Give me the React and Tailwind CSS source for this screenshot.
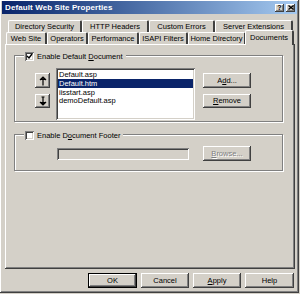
import React from 'react';

const raised = 'shadow-[inset_-1px_-1px_0_#404040,inset_1px_1px_0_#ffffff,inset_-2px_-2px_0_#808080]';
const sunken = 'shadow-[inset_1px_1px_0_#808080,inset_-1px_-1px_0_#ffffff,inset_2px_2px_0_#404040,inset_-2px_-2px_0_#d4d0c8]';

function Button({ children, className = '', disabled = false }) {
  return (
    <div
      className={`flex items-center justify-center bg-[#d4d0c8] ${raised} ${
        disabled ? 'text-[#808080] [text-shadow:1px_1px_0_#fff]' : 'text-black'
      } ${className}`}
    >
      {children}
    </div>
  );
}

function Check({ checked }) {
  return (
    <div className={`w-[9px] h-[9px] bg-white ${sunken} flex items-center justify-center`}>
      {checked && (
        <svg width="7" height="7" viewBox="0 0 7 7">
          <path d="M1 3 L3 5 L6 1" stroke="#000" strokeWidth="1.4" fill="none" />
        </svg>
      )}
    </div>
  );
}

function Tab({ label, w }) {
  return (
    <div
      className={`shrink-0 h-[12px] flex items-center justify-center border-t border-l border-white border-r-2 border-r-[#404040] rounded-t-[2px] ${w}`}
    >
      {label}
    </div>
  );
}

export default function App() {
  return (
    <div className="w-[300px] h-[294px] bg-[#d4d0c8] text-[7.5px] text-black font-['Liberation_Sans',Arial,sans-serif] leading-none overflow-hidden">
      <div className={`relative w-[299px] h-[293px] ${raised} p-[2px] flex flex-col`}>
        {/* title bar */}
        <div className="h-[13px] mt-[-1px] flex items-center justify-between bg-gradient-to-r from-[#0a246a] to-[#a6caf0] pl-[3px] pr-[2px]">
          <span className="text-white font-bold text-[8px] tracking-[0.1px]">Default Web Site Properties</span>
          <div className="flex gap-[2px]">
            <Button className="w-[9px] h-[8px] font-bold text-[7px]">?</Button>
            <Button className="w-[9px] h-[8px]">
              <svg width="6" height="5" viewBox="0 0 6 5">
                <path d="M0.5 0.5 L5.5 4.5 M5.5 0.5 L0.5 4.5" stroke="#000" strokeWidth="1.3" />
              </svg>
            </Button>
          </div>
        </div>

        {/* tabs */}
        <div className="mt-[6px] flex pl-[6px]">
          <Tab label="Directory Security" w="w-[74px]" />
          <Tab label="HTTP Headers" w="w-[67px]" />
          <Tab label="Custom Errors" w="w-[66px]" />
          <Tab label="Server Extensions" w="w-[78px]" />
        </div>
        <div className="flex pl-[4px] relative z-10">
          <Tab label="Web Site" w="w-[41px]" />
          <Tab label="Operators" w="w-[41px]" />
          <Tab label="Performance" w="w-[51px]" />
          <Tab label="ISAPI Filters" w="w-[49px]" />
          <Tab label="Home Directory" w="w-[58px]" />
          <div className="shrink-0 w-[49px] h-[15px] -mt-[2px] -ml-[1px] flex items-start pt-[3px] justify-center bg-[#d4d0c8] border-t border-l border-white border-r-2 border-r-[#404040] rounded-t-[2px]">
            Documents
          </div>
        </div>

        {/* panel */}
        <div className={`ml-[3px] w-[290px] h-[225px] -mt-[1px] ${raised} pt-[11px] px-[9px] flex flex-col`}>
          {/* group 1 */}
          <div className="relative h-[67px] border border-[#808080] shadow-[inset_1px_1px_0_#fff,1px_1px_0_#fff] mr-[3px] flex pt-[12px] pl-[20px]">
            <div className="absolute left-[9px] -top-[4px] flex items-center gap-[3px] bg-[#d4d0c8] pl-[1px] pr-[3px]">
              <Check checked />
              <span>Enable Default <span className="underline">D</span>ocument</span>
            </div>
            <div className="flex flex-col gap-[6px] mt-[5px]">
              <Button className="w-[15px] h-[15px]">
                <svg width="8" height="10" viewBox="0 0 8 10">
                  <path d="M4 1 L4 9.5 M1 4 L4 1 L7 4 M1.5 3.5 L6.5 3.5" stroke="#000" strokeWidth="1.2" fill="none" />
                </svg>
              </Button>
              <Button className="w-[15px] h-[14px]">
                <svg width="8" height="10" viewBox="0 0 8 10">
                  <path d="M4 0.5 L4 9 M1 6 L4 9 L7 6 M1.5 6.5 L6.5 6.5 M2.5 1 L5.5 1" stroke="#000" strokeWidth="1.2" fill="none" />
                </svg>
              </Button>
            </div>
            <div className={`ml-[6px] w-[139px] h-[52px] bg-white ${sunken} p-[2px] flex flex-col`}>
              <div className="h-[9px] flex items-center pl-[1px]">Default.asp</div>
              <div className="h-[9px] flex items-center pl-[1px] bg-[#0a246a] text-white">Default.htm</div>
              <div className="h-[9px] flex items-center pl-[1px]">iisstart.asp</div>
              <div className="h-[8px] flex items-center pl-[1px]">demoDefault.asp</div>
            </div>
            <div className="ml-[8px] flex flex-col gap-[6px] mt-[5px]">
              <Button className="w-[48px] h-[15px]">
                <span>A<span className="underline">d</span>d...</span>
              </Button>
              <Button className="w-[48px] h-[14px]">
                <span><span className="underline">R</span>emove</span>
              </Button>
            </div>
          </div>

          {/* group 2 */}
          <div className="relative mt-[12px] h-[37px] border border-[#808080] shadow-[inset_1px_1px_0_#fff,1px_1px_0_#fff] mr-[3px] flex items-start pt-[12px] pl-[42px]">
            <div className="absolute left-[9px] -top-[4px] flex items-center gap-[3px] bg-[#d4d0c8] pl-[1px] pr-[3px]">
              <Check />
              <span>Enable D<span className="underline">o</span>cument Footer</span>
            </div>
            <div className={`w-[132px] h-[12px] mt-[1px] bg-[#d4d0c8] ${sunken}`} />
            <Button className="ml-[14px] w-[48px] h-[15px] -mt-[1px]" disabled>
              <span><span className="underline">B</span>rowse...</span>
            </Button>
          </div>
        </div>

        {/* bottom buttons */}
        <div className="mt-[4px] flex justify-end gap-[4px] pr-[3px]">
          <Button className="w-[49px] h-[15px] shadow-[inset_0_0_0_1px_#000,inset_-2px_-2px_0_#404040,inset_2px_2px_0_#ffffff,inset_-3px_-3px_0_#808080]">OK</Button>
          <Button className="w-[48px] h-[15px]">Cancel</Button>
          <Button className="w-[48px] h-[15px]">
            <span><span className="underline">A</span>pply</span>
          </Button>
          <Button className="w-[49px] h-[15px]">Help</Button>
        </div>
      </div>
    </div>
  );
}
